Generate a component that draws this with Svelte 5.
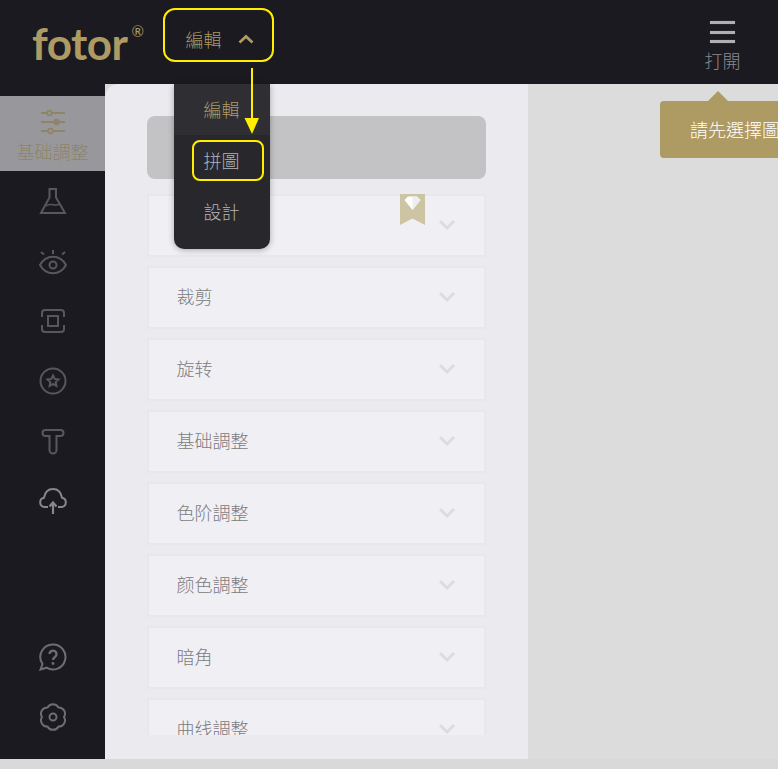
<script>
  const items = ['裁剪', '旋转', '基础調整', '色阶調整', '颜色調整', '暗角', '曲线調整'];
</script>

<div class="page">
  <header class="top">
    <div class="logo"><span class="word">fotor</span><span class="reg">®</span></div>
    <button class="mode">編輯
      <svg width="16" height="10" viewBox="0 0 16 10"><path d="M1.500 8.500 8 2.500l6.500 6" fill="none" stroke="#ae9a63" stroke-width="2.800"/></svg>
    </button>
    <div class="open">
      <div class="burger"><i></i><i></i><i></i></div>
      <span>打開</span>
    </div>
  </header>

  <div class="main">
    <nav class="side">
      <div class="tool active">
        <svg width="26" height="26" viewBox="1 1 26 26" fill="none" stroke="#8f8468" stroke-width="1.800">
          <path d="M2 5h6M13 5h13M2 14h13M20 14h6M2 23h7M14 23h12"/>
          <circle cx="10.500" cy="5" r="2.300"/><circle cx="17.500" cy="14" r="2.300" fill="#8f8468"/><circle cx="11.500" cy="23" r="2.300"/>
        </svg>
        <span>基础調整</span>
      </div>
      <div class="tool"><svg width="28" height="28" viewBox="0 0 28 28" fill="none" stroke="#58585c" stroke-width="2"><path d="M10.500 2h6.500v8.500L26 26H2l8.500-15.500z"/><path d="M7 19c5-4 8 1 14-2" stroke-width="1.500"/></svg></div>
      <div class="tool"><svg width="30" height="28" viewBox="0 -2 30 28" fill="none" stroke="#58585c" stroke-width="2"><path d="M2 16c6-11 20-11 26 0-6 11-20 11-26 0z"/><circle cx="15" cy="16" r="3.500"/><path d="M15 1v4M3 3l3 2.500M27 3l-3 2.500"/></svg></div>
      <div class="tool"><svg width="28" height="28" viewBox="0 0 28 28" fill="none" stroke="#58585c" stroke-width="2"><path d="M3 10V6a3 3 0 0 1 3-3h16a3 3 0 0 1 3 3v4M3 18v4a3 3 0 0 0 3 3h16a3 3 0 0 0 3-3v-4"/><rect x="9" y="9" width="10" height="10"/></svg></div>
      <div class="tool"><svg width="28" height="28" viewBox="0 0 28 28" fill="none" stroke="#58585c" stroke-width="2"><circle cx="14" cy="14" r="12.500"/><path d="m14 8.500 1.700 3.400 3.800.5-2.800 2.600.7 3.800-3.400-1.800-3.400 1.800.7-3.800-2.800-2.600 3.800-.5z"/></svg></div>
      <div class="tool"><svg width="26" height="28" viewBox="0 0 26 28" fill="none" stroke="#58585c" stroke-width="2"><path d="M5.500 3h15a2.800 2.800 0 0 1 0 6h-4v14a3.500 3.500 0 0 1-7 0V9h-4a2.800 2.800 0 0 1 0-6z"/></svg></div>
      <div class="tool"><svg width="30" height="28" viewBox="0 0 30 28" fill="none" stroke="#88888b" stroke-width="2"><path d="M10 20H6.500a4.700 4.700 0 0 1-.5-9.300C7 5 10 2 15 2s8 3 9 8.700a4.700 4.700 0 0 1-.5 9.300H20"/><path d="M15 27V16M11.500 19.500 15 15.500l3.500 4" stroke-width="2.200"/></svg></div>
      <div class="spacer"></div>
      <div class="tool"><svg width="28" height="28" viewBox="0 0 28 28" fill="none" stroke="#6e6e71" stroke-width="2"><path d="M14 1.500a12.500 12.500 0 1 1-6.500 23.200L1.500 26.500l2-5.500A12.500 12.500 0 0 1 14 1.500z"/><path d="M10.500 11a3.500 3.500 0 1 1 5.500 3c-1.300 1-2 1.500-2 3" stroke-width="2.400"/><circle cx="14" cy="20.500" r="1.400" fill="#6e6e71" stroke="none"/></svg></div>
      <div class="tool"><svg width="28" height="28" viewBox="0 0 28 28" fill="none" stroke="#6e6e71" stroke-width="2" stroke-linejoin="round"><path d="M8.500 4.470A6.200 6.200 0 0 1 19.500 4.470 6.200 6.200 0 0 1 25 14 6.200 6.200 0 0 1 19.500 23.530 6.200 6.200 0 0 1 8.500 23.530 6.200 6.200 0 0 1 3 14 6.200 6.200 0 0 1 8.500 4.470z"/><circle cx="14" cy="14" r="3.500"/></svg></div>
    </nav>

    <section class="panel">
      <div class="scroll">
        <div class="search"></div>
        <div class="row first">
          <svg class="badge" width="25" height="31" viewBox="0 0 25 31"><path d="M0 0h25v31l-12.500-6.500L0 31z" fill="#cdc4a4"/><path d="M4.500 6 8 2.500h9L20.500 6l-8 10z" fill="#fff"/><path d="M12.500 2.500H17L20.500 6l-8 10z" fill="#eeeeee"/></svg>
          <svg class="chev" width="18" height="12" viewBox="0 0 18 12"><path d="M2 2l7 7 7-7" fill="none" stroke="#dcdce0" stroke-width="3"/></svg>
        </div>
        {#each items as item}
          <div class="row">
            <span>{item}</span>
            <svg class="chev" width="18" height="12" viewBox="0 0 18 12"><path d="M2 2l7 7 7-7" fill="none" stroke="#dcdce0" stroke-width="3"/></svg>
          </div>
        {/each}
      </div>
    </section>

    <section class="canvas"></section>
  </div>

  <div class="tip"><span class="tip-text">請先選擇圖片</span></div>

  <div class="menu">
    <div class="opt current">編輯</div>
    <div class="opt">拼圖</div>
    <div class="opt">設計</div>
  </div>
  <div class="mark"></div>
  <svg class="arrow" width="20" height="68" viewBox="0 0 20 68"><path d="M10 0v52" stroke="#ffee00" stroke-width="2"/><path d="M2.500 50h14.500L10 66z" fill="#ffee00"/></svg>
</div>

<style>
  :global(body) { margin: 0; background: #d9d9d9; }
  .page {
    position: relative;
    width: 778px;
    height: 769px;
    overflow: hidden;
    background: #d9d9d9;
    font-family: "Noto Sans CJK TC", "Noto Sans", sans-serif;
    font-weight: 300;
    display: flex;
    flex-direction: column;
  }
  .top {
    height: 84px;
    flex: none;
    background: #1a1a20;
    display: flex;
    align-items: flex-start;
    position: relative;
  }
  .logo {
    width: 163px;
    padding-left: 32px;
    box-sizing: border-box;
    display: flex;
    align-items: flex-start;
    color: #ae9a63;
    font-family: Lato, sans-serif;
  }
  .word { font-size: 44px; font-weight: 700; line-height: 86px; letter-spacing: -0.5px; }
  .reg { font-size: 15px; line-height: 16px; margin: 23px 0 0 4px; font-weight: 400; }
  .mode {
    margin-top: 8px;
    width: 111px;
    height: 54px;
    box-sizing: border-box;
    border: 2px solid #ffee00;
    border-radius: 12px;
    background: transparent;
    color: #ae9a63;
    font: inherit;
    font-size: 18px;
    display: flex;
    align-items: center;
    gap: 16px;
    padding: 8px 0 0 20.500px;
  }
  .open {
    margin-left: auto;
    width: 111px;
    padding-top: 21px;
    display: flex;
    flex-direction: column;
    align-items: center;
    color: #8a8a8e;
    font-size: 18px;
    line-height: 26px;
  }
  .burger { width: 25px; height: 22px; display: flex; flex-direction: column; justify-content: space-between; margin-bottom: 4px; }
  .burger i { display: block; height: 3px; background: #b0b0b3; box-shadow: 0 0 1px #77777b; }
  .main { display: flex; height: 675px; flex: none; }
  .side {
    width: 105px;
    flex: none;
    background: #1a1a20;
    box-sizing: border-box;
    padding: 12px 0 12px;
    display: flex;
    flex-direction: column;
  }
  .spacer { flex: 1; }
  .tool {
    height: 60px;
    display: flex;
    flex-direction: column;
    align-items: center;
    justify-content: center;
    flex: none;
  }
  .tool.active {
    height: 75px;
    background: #98989c;
    color: #8f8468;
    font-size: 18px;
    line-height: 26px;
    justify-content: flex-start;
    padding-top: 13px;
    box-sizing: border-box;
  }
  .tool.active span { margin-top: 3px; }
  .panel {
    width: 423px;
    flex: none;
    background: #ebebef;
    border-top-left-radius: 14px;
    box-sizing: border-box;
    padding: 32px 42px 24px;
  }
  .scroll { height: 619px; overflow: hidden; }
  .search { height: 63px; border-radius: 8px; background: #c3c3c5; margin-bottom: 15px; }
  .row {
    position: relative;
    height: 63px;
    box-sizing: border-box;
    margin-bottom: 9px;
    background: #f0f0f4;
    border: 2px solid #e8e8ec;
    display: flex;
    align-items: center;
    padding: 0 27px 4px 27.500px;
    color: #7c7c80;
    font-size: 18px;
  }
  .chev { position: absolute; right: 28px; top: 23px; }
  .badge { position: absolute; left: 251px; top: -2px; }
  .canvas { flex: 1; background: #dcdcdc; }
  .tip {
    position: absolute;
    left: 660px;
    top: 101px;
    width: 130px;
    height: 57px;
    background: #ae9a63;
    border-radius: 4px;
    color: #fff;
    font-size: 18px;
    box-sizing: border-box;
    padding: 15px 0 0 30px;
  }
  .tip-text { display: block; width: 88px; height: 27px; overflow: hidden; white-space: nowrap; }
  .tip::before {
    content: "";
    position: absolute;
    left: 48px;
    top: -10px;
    width: 0;
    height: 0;
    border-left: 10px solid transparent;
    border-right: 10px solid transparent;
    border-bottom: 10px solid #ae9a63;
  }
  .menu {
    position: absolute;
    left: 174px;
    top: 84px;
    width: 96px;
    height: 165px;
    background: #27272c;
    border-radius: 0 0 10px 10px;
    box-shadow: 0 1px 6px rgba(0, 0, 0, 0.3);
    color: #b4b4b8;
    font-size: 18px;
  }
  .opt {
    height: 51px;
    line-height: 51px;
    padding-left: 29.500px;
  }
  .opt.current { height: 51px; background: #2e2e33; color: #ae9a63; }
  .mark {
    position: absolute;
    left: 192px;
    top: 140px;
    width: 72px;
    height: 41px;
    box-sizing: border-box;
    border: 2px solid #ffee00;
    border-radius: 8px;
  }
  .arrow { position: absolute; left: 242px; top: 68px; }
</style>
